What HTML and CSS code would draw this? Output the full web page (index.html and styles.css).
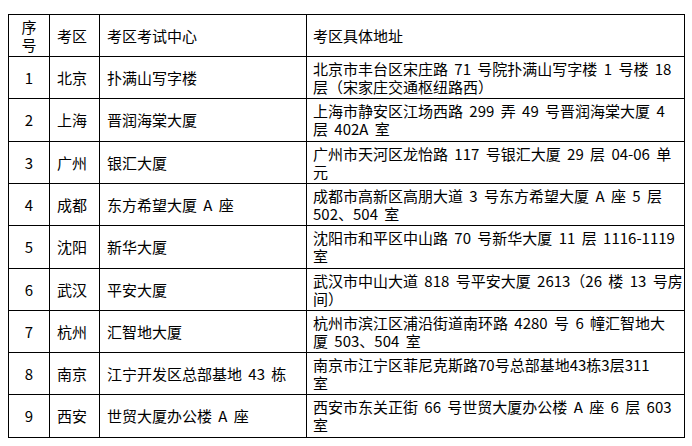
FILE: index.html
```html
<!DOCTYPE html>
<html lang="zh-CN">
<head>
<meta charset="utf-8">
<title>考区考试中心</title>
<link rel="stylesheet" href="styles.css">
</head>
<body>
<table class="sites">
  <colgroup>
    <col class="c-no">
    <col class="c-area">
    <col class="c-center">
    <col class="c-addr">
  </colgroup>
  <tr class="r42">
    <td class="no">序<br>号</td>
    <td class="area">考区</td>
    <td class="center">考区考试中心</td>
    <td class="addr">考区具体地址</td>
  </tr>
  <tr class="r42">
    <td class="no">1</td>
    <td class="area">北京</td>
    <td class="center">扑满山写字楼</td>
    <td class="addr">北京市丰台区宋庄路 71 号院扑满山写字楼 1 号楼 18<br>层（宋家庄交通枢纽路西）</td>
  </tr>
  <tr class="r43">
    <td class="no">2</td>
    <td class="area">上海</td>
    <td class="center">晋润海棠大厦</td>
    <td class="addr">上海市静安区江场西路 299 弄 49 号晋润海棠大厦 4<br>层 402A 室</td>
  </tr>
  <tr class="r42">
    <td class="no">3</td>
    <td class="area">广州</td>
    <td class="center">银汇大厦</td>
    <td class="addr">广州市天河区龙怡路 117 号银汇大厦 29 层 04-06 单<br>元</td>
  </tr>
  <tr class="r42">
    <td class="no">4</td>
    <td class="area">成都</td>
    <td class="center">东方希望大厦 A 座</td>
    <td class="addr">成都市高新区高朋大道 3 号东方希望大厦 A 座 5 层<br>502、504 室</td>
  </tr>
  <tr class="r43">
    <td class="no">5</td>
    <td class="area">沈阳</td>
    <td class="center">新华大厦</td>
    <td class="addr">沈阳市和平区中山路 70 号新华大厦 11 层 1116-1119<br>室</td>
  </tr>
  <tr class="r42">
    <td class="no">6</td>
    <td class="area">武汉</td>
    <td class="center">平安大厦</td>
    <td class="addr">武汉市中山大道 818 号平安大厦 2613（26 楼 13 号房<br>间）</td>
  </tr>
  <tr class="r42">
    <td class="no">7</td>
    <td class="area">杭州</td>
    <td class="center">汇智地大厦</td>
    <td class="addr">杭州市滨江区浦沿街道南环路 4280 号 6 幢汇智地大<br>厦 503、504 室</td>
  </tr>
  <tr class="r42">
    <td class="no">8</td>
    <td class="area">南京</td>
    <td class="center">江宁开发区总部基地 43 栋</td>
    <td class="addr">南京市江宁区菲尼克斯路70号总部基地43栋3层311<br>室</td>
  </tr>
  <tr class="r43">
    <td class="no">9</td>
    <td class="area">西安</td>
    <td class="center">世贸大厦办公楼 A 座</td>
    <td class="addr">西安市东关正街 66 号世贸大厦办公楼 A 座 6 层 603<br>室</td>
  </tr>
</table>
</body>
</html>
```

FILE: styles.css
```css
html, body {
  margin: 0;
  padding: 0;
  background: #ffffff;
}

body {
  padding: 14px 0 0 8px;
  font-family: "Noto Sans CJK SC", "Noto Sans", sans-serif;
  font-size: 15px;
  color: #000000;
}

.sites {
  border-collapse: collapse;
  table-layout: fixed;
  width: 676px;
}

.c-no { width: 41px; }
.c-area { width: 50px; }
.c-center { width: 207px; }
.c-addr { width: 378px; }

.sites td {
  border: 1px solid #000000;
  padding: 0 0 0 7px;
  line-height: 18px;
  vertical-align: middle;
  white-space: nowrap;
  overflow: hidden;
  word-spacing: 3px;
}

.r42 { height: 42px; }
.r43 { height: 43px; }

.sites td.no {
  text-align: center;
  padding: 0;
}

.sites td.area {
  padding-left: 7px;
}

.sites td.addr {
  padding-left: 6px;
}
```
